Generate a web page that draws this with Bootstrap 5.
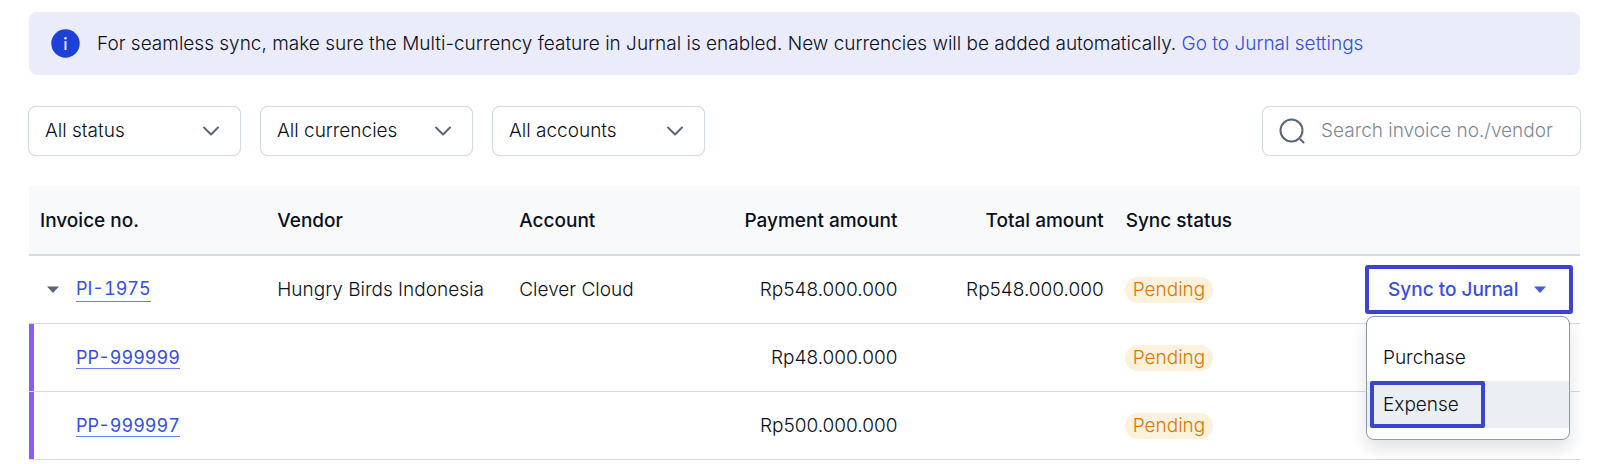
<!DOCTYPE html>
<html lang="en">
<head>
<meta charset="utf-8">
<meta name="viewport" content="width=device-width, initial-scale=1">
<title>Invoices</title>
<link href="https://cdn.jsdelivr.net/npm/bootstrap@5.3.0/dist/css/bootstrap.min.css" rel="stylesheet">
<style>
  :root { --ink: #0a1020; --link: #3550dc; --line: #d4dbe4; --frame: #3b44cf; }
  body { font-family: Inter, "Liberation Sans", sans-serif; font-size: 19px; line-height: 24px; font-weight: 300; color: var(--ink); background: #fff; }
  a { color: var(--link); }
  .page-wrap { padding: 12px 20px 0 29px; }
  .notice { background: #eaebfb; border-radius: 8px; min-height: 63px; padding: 16px 22px; gap: 17px; }
  .filters { gap: 19px; margin: 31px -1px 30px -1px; }
  .filter-box, .search-box { height: 50px; border: 1px solid var(--line); border-radius: 8px; font-size: 19px; font-weight: 300; color: var(--ink); box-shadow: 0 0 1px var(--line); }
  .filter-box { width: 213px; padding: 0 48px 0 16px; background-position: right 19px center; background-size: 20px 20px;
    background-image: url("data:image/svg+xml,%3Csvg xmlns='http://www.w3.org/2000/svg' viewBox='0 0 20 20'%3E%3Cpath d='M3 6.5l7 7 7-7' fill='none' stroke='%235b6578' stroke-width='2' stroke-linecap='round' stroke-linejoin='round'/%3E%3C/svg%3E"); }
  .search-box { width: 319px; padding: 0 8px 0 16px; gap: 16px; }
  .search-box input { font-size: 19px; font-weight: 300; color: var(--ink); appearance: none; }
  .search-box input::placeholder { color: #7d899b; opacity: 1; }
  .invoices { table-layout: fixed; color: var(--ink); --bs-table-bg: transparent; --bs-table-color: var(--ink); }
  .invoices > :not(caption) > * > * { height: 68px; padding: 1px 11px 0; border-bottom: 1px solid var(--line); vertical-align: middle; white-space: nowrap; color: var(--ink); }
  .invoices > thead > tr > * { height: 69px; background: #f8f9fb; font-weight: 500; border-bottom-width: 2px; }
  .invoices .ref { text-decoration: none; color: var(--link); border-bottom: 1px solid #6b80ee; font-size: 18px; font-weight: 400; font-variant-numeric: tabular-nums; }
  .toggler { width: 14px; height: 24px; margin: 0 16px 0 6px; }
  .invoices > tbody > tr.child-row > td:first-child { padding-left: 47px; background: linear-gradient(#8b5cf6, #8b5cf6) left / 5px 100% no-repeat; }
  .state { background: #fcf1dc; color: #d97a00; border-radius: 13px; padding: 0 8px; height: 26px; line-height: 26px; margin-left: -1px; }
  .sync { width: 208px; margin-left: auto; margin-right: -4px; }
  .sync-btn { width: 208px; height: 49px; border: 4px solid var(--frame); border-radius: 3px; background: #fff; color: var(--link); font-weight: 500; padding: 0 22px 0 19px; }
  .sync .dropdown-menu { top: 51px; left: 1px; width: 204px; min-width: 0; padding: 17px 0 11px; border: 1px solid #8e99ad; border-radius: 8px; box-shadow: 0 8px 16px rgba(15,23,42,.13); font-size: 19px; }
  .sync .dropdown-item { height: 47px; padding: 0 16px; color: var(--ink); font-weight: 300; }
  .sync .dropdown-item.current { background: #ebeff3; padding-left: 3px; }
  .marked { border: 4px solid var(--frame); border-radius: 2px; width: 115px; height: 47px; padding-left: 9px; }
</style>
</head>
<body>
<main class="page-wrap">
  <div class="notice d-flex align-items-center" role="status">
    <svg class="flex-shrink-0" width="29" height="29" viewBox="0 0 29 29" aria-hidden="true"><circle cx="14.5" cy="14.5" r="14.2" fill="#1c40d8"/><circle cx="14.5" cy="9.2" r="1.3" fill="#dfe5ff"/><path d="M14.5 12v9" stroke="#dfe5ff" stroke-width="2"/></svg>
    <span>For seamless sync, make sure the Multi-currency feature in Jurnal is enabled. New currencies will be added automatically. <a class="text-decoration-none" href="#">Go to Jurnal settings</a></span>
  </div>

  <form class="filters d-flex align-items-center">
    <select class="form-select filter-box" aria-label="Status"><option>All status</option></select>
    <select class="form-select filter-box" aria-label="Currency"><option>All currencies</option></select>
    <select class="form-select filter-box" aria-label="Account"><option>All accounts</option></select>
    <label class="search-box d-flex align-items-center ms-auto">
      <svg class="flex-shrink-0" width="26" height="26" viewBox="0 0 26 26" fill="none" stroke="#5b6578" stroke-width="2" aria-hidden="true"><circle cx="12.5" cy="12.5" r="11"/><path d="M21.5 21.5l3 3" stroke-linecap="round"/></svg>
      <input class="border-0 p-0 bg-transparent flex-grow-1 w-100" type="text" placeholder="Search invoice no./vendor" aria-label="Search invoice no./vendor">
    </label>
  </form>

  <table class="table invoices mb-0">
    <colgroup><col style="width:15.3%"><col style="width:15.6%"><col style="width:12.4%"><col style="width:13.4%"><col style="width:13.3%"><col style="width:13%"><col></colgroup>
    <thead>
      <tr><th scope="col">Invoice no.</th><th scope="col">Vendor</th><th scope="col">Account</th><th scope="col" class="text-end">Payment amount</th><th scope="col" class="text-end">Total amount</th><th scope="col">Sync status</th><td></td></tr>
    </thead>
    <tbody>
      <tr>
        <td><div class="d-flex align-items-center"><button class="toggler btn p-0 border-0 d-flex align-items-center" type="button" aria-label="Collapse"><svg width="14" height="8" viewBox="0 0 14 8"><path d="M1 .5h12L7 7z" fill="#5b6578"/></svg></button><a class="ref" href="#">PI-1975</a></div></td>
        <td>Hungry Birds Indonesia</td><td>Clever Cloud</td><td class="text-end">Rp548.000.000</td><td class="text-end">Rp548.000.000</td>
        <td><span class="state d-inline-block">Pending</span></td>
        <td>
          <div class="sync dropdown">
            <button class="sync-btn d-flex align-items-center justify-content-between" type="button" aria-expanded="true">Sync to Jurnal <svg width="14" height="8" viewBox="0 0 14 8" aria-hidden="true"><path d="M1 .5h12L7 7z" fill="#3f5bdf"/></svg></button>
            <div class="dropdown-menu show">
              <a class="dropdown-item d-flex align-items-center" href="#">Purchase</a>
              <a class="dropdown-item current d-flex align-items-center" href="#"><span class="marked d-flex align-items-center">Expense</span></a>
            </div>
          </div>
        </td>
      </tr>
      <tr class="child-row"><td><a class="ref" href="#">PP-999999</a></td><td></td><td></td><td class="text-end">Rp48.000.000</td><td></td><td><span class="state d-inline-block">Pending</span></td><td></td></tr>
      <tr class="child-row"><td><a class="ref" href="#">PP-999997</a></td><td></td><td></td><td class="text-end">Rp500.000.000</td><td></td><td><span class="state d-inline-block">Pending</span></td><td></td></tr>
    </tbody>
  </table>
</main>
<script src="https://cdn.jsdelivr.net/npm/bootstrap@5.3.0/dist/js/bootstrap.bundle.min.js"></script>
</body>
</html>
